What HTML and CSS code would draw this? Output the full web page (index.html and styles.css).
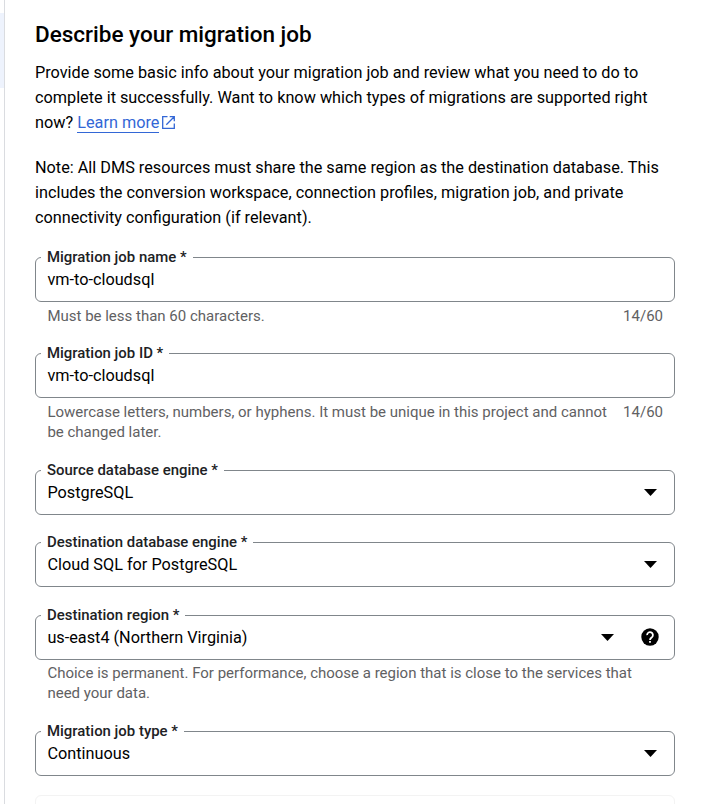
FILE: index.html
```
<!DOCTYPE html>
<html lang="en">
<head>
<meta charset="utf-8">
<title>Describe your migration job</title>
<link rel="stylesheet" href="styles.css">
</head>
<body>
<div class="page">
<aside class="rail"><div class="rail-active"></div></aside>
<main class="content">
<h1>Describe your migration job</h1>
<p class="intro">Provide some basic info about your migration job and review what you need to do to<br>complete it successfully. Want to know which types of migrations are supported right<br>now? <a class="learn"><span>Learn more</span><svg width="13" height="13" viewBox="0 0 13 13" fill="none" stroke="currentColor" stroke-width="1.3"><path d="M5.5.7H.7v11.6h11.6V7.5M7.7.7h4.6v4.6M12.2.8 4.3 8.7"/></svg></a></p>
<p class="note">Note: All DMS resources must share the same region as the destination database. This<br>includes the conversion workspace, connection profiles, migration job, and private<br>connectivity configuration (if relevant).</p>
<form>
<fieldset class="field"><legend>Migration job name *</legend><span class="value">vm-to-cloudsql</span></fieldset>
<div class="hint"><span>Must be less than 60 characters.</span><span>14/60</span></div>
<fieldset class="field id"><legend>Migration job ID *</legend><span class="value">vm-to-cloudsql</span></fieldset>
<div class="hint"><span>Lowercase letters, numbers, or hyphens. It must be unique in this project and cannot<br>be changed later.</span><span>14/60</span></div>
<fieldset class="field source"><legend>Source database engine *</legend><span class="value">PostgreSQL</span><i class="arrow"></i></fieldset>
<fieldset class="field dest"><legend>Destination database engine *</legend><span class="value">Cloud SQL for PostgreSQL</span><i class="arrow"></i></fieldset>
<fieldset class="field region"><legend>Destination region *</legend><span class="value">us-east4 (Northern Virginia)</span><i class="arrow"></i><svg class="help" width="18" height="18" viewBox="0 0 18 18"><circle cx="9" cy="9" r="8.7"/><path d="M6.1 7.1a2.9 2.9 0 1 1 4.9 2C9.7 10.1 9 10.4 9 12" fill="none" stroke="#fff" stroke-width="1.8"/><path d="M8.1 13h1.8v1.8H8.1z" fill="#fff"/></svg></fieldset>
<div class="hint region-hint"><span>Choice is permanent. For performance, choose a region that is close to the services that<br>need your data.</span></div>
<fieldset class="field type"><legend>Migration job type *</legend><span class="value">Continuous</span><i class="arrow"></i></fieldset>
</form>
<div class="card"></div>
</main>
</div>
</body>
</html>
```
FILE: styles.css
```
* { box-sizing: border-box; }
body { margin: 0; background: #fff; color: #000; font-family: Roboto, sans-serif; font-size: 16.25px; }
.page { display: flex; height: 804px; overflow: hidden; }
.rail { width: 5px; border-right: 1px solid #dadce0; padding-top: 13px; }
.rail-active { height: 75px; background: #eef3fd; }
.content { width: 640px; margin-left: 30px; white-space: nowrap; }
h1 { margin: 20px 0 12px; font-size: 22.5px; line-height: 28px; font-weight: 500; }
p { margin: 0 0 20px; line-height: 25px; }
.note { margin-bottom: 18px; }
.learn { color: #3367d6; }
.learn span { border-bottom: 1px solid #3367d6; }
.learn svg { margin-left: 3px; vertical-align: -1px; }
.field { display: flex; align-items: flex-start; height: 54px; margin: 0; padding: 4px 12px 0 5px; border: 1px solid #80868b; border-radius: 6px; min-width: 0; }
legend { padding: 0 6px; font-size: 14.93px; line-height: 18px; font-weight: 500; color: #202124; transform: translateY(-0.5px); }
.value { padding-left: 6.4px; line-height: 20px; flex: 1; }
.hint { display: flex; justify-content: space-between; padding: 4px 12px 0 12.4px; font-size: 15px; line-height: 20px; color: #5f6163; }
.region-hint { padding-top: 3px; padding-bottom: 1px; }
.id { margin-top: 18px; }
.source { margin-top: 19px; }
.dest { margin-top: 18px; }
.region { margin-top: 19px; }
.type { margin-top: 18px; }
.arrow { width: 13px; height: 7px; margin: 6px 5px 0; background: #000; clip-path: polygon(0 0, 100% 0, 50% 100%); }
.region .arrow { margin-right: 27px; }
.help { margin-right: 3px; }
.card { margin-top: 19px; height: 30px; border: 1px solid #f3f3f3; border-radius: 6px; }
```
